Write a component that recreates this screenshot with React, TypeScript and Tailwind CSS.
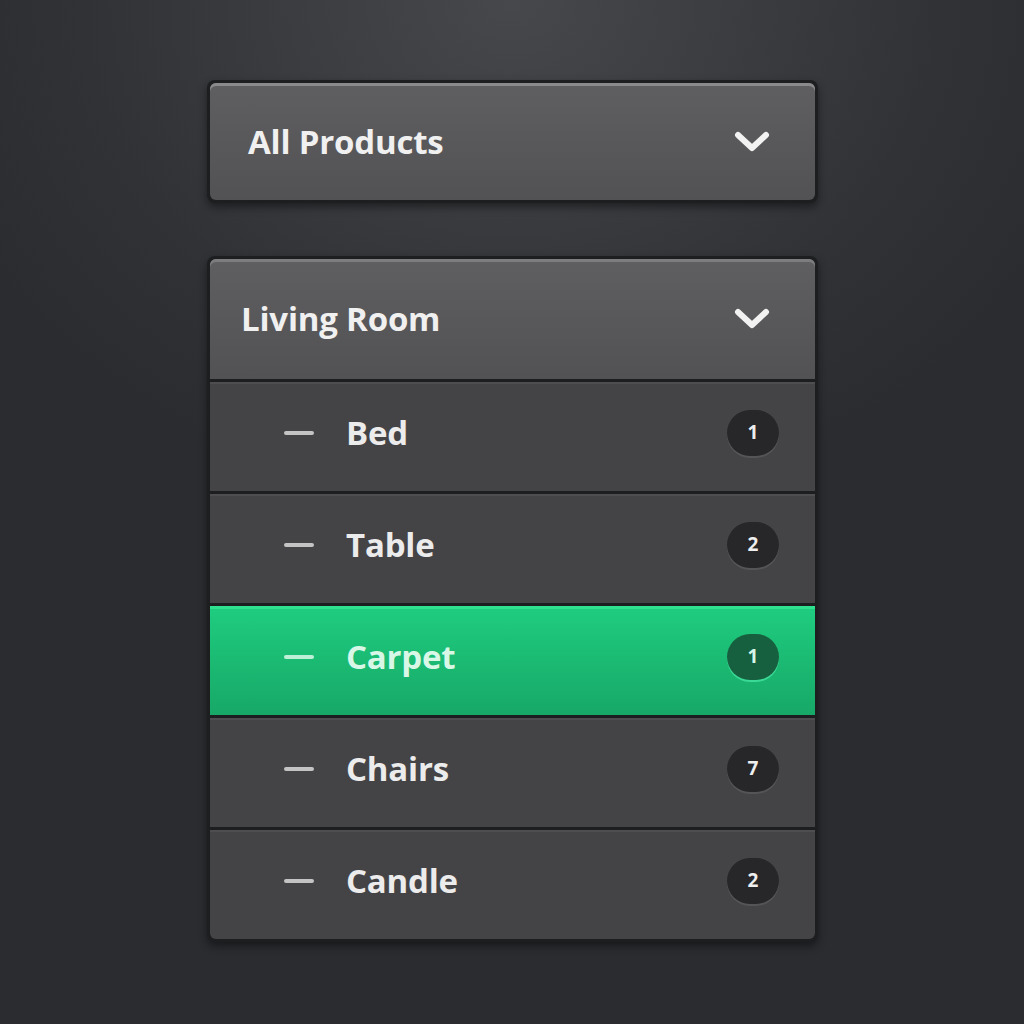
import { useState } from 'react';

const items = [
  { name: 'Bed', count: 1 },
  { name: 'Table', count: 2 },
  { name: 'Carpet', count: 1 },
  { name: 'Chairs', count: 7 },
  { name: 'Candle', count: 2 },
];

const Chevron = () => (
  <svg width="36" height="22" viewBox="0 0 36 22" className="shrink-0">
    <polyline points="4,4 18,17 32,4" fill="none" stroke="#f2f2f2" strokeWidth="6" strokeLinecap="round" strokeLinejoin="round" />
  </svg>
);

const App = () => {
  const [active, setActive] = useState('Carpet');

  return (
    <div
      className="w-[1024px] h-[1024px] overflow-hidden bg-[radial-gradient(ellipse_60%_50%_at_50%_0%,#47484b,#303236_70%,#2a2c30)] pt-[80px] pl-[207px]"
      style={{ fontFamily: '"Open Sans", "Liberation Sans", sans-serif' }}
    >
      <div className="w-[611px] flex flex-col gap-[53px]">
        <div className="rounded-lg bg-[#1d1e20] p-[3px] shadow-[0_4px_8px_rgba(0,0,0,0.45)]">
          <div className="h-[117px] rounded-md bg-gradient-to-b from-[#5f5f61] to-[#525254] shadow-[inset_0_3px_0_#8a8a8c] flex items-center justify-between pl-[38px] pr-[45px]">
            <span className="text-[33px] font-bold text-[#f0f0f0] tracking-[-0.2px]">All Products</span>
            <Chevron />
          </div>
        </div>

        <div className="rounded-lg bg-[#1d1e20] p-[3px] shadow-[0_4px_8px_rgba(0,0,0,0.45)]">
          <div className="h-[120px] rounded-t-md bg-gradient-to-b from-[#5f5f61] to-[#525254] shadow-[inset_0_3px_0_#7d7d80] flex items-center justify-between pl-[31px] pr-[45px]">
            <span className="text-[33px] font-bold text-[#f0f0f0] tracking-[-0.2px]">Living Room</span>
            <Chevron />
          </div>
          <div className="flex flex-col gap-[3px] pt-[3px]">
            {items.map((item, i) => {
              const on = item.name === active;
              return (
                <button
                  key={item.name}
                  onClick={() => setActive(item.name)}
                  className={`h-[109px] flex items-center pl-[74px] pr-[36px] pb-[8px] text-left ${
                    on
                      ? 'bg-gradient-to-b from-[#1fcd80] to-[#17a867] shadow-[inset_0_3px_0_#2fe08f]'
                      : 'bg-[#444447] shadow-[inset_0_2px_0_#4e4e51]'
                  } ${i === items.length - 1 ? 'rounded-b-md' : ''}`}
                >
                  <span className={`w-[30px] h-[4px] rounded-sm ${on ? 'bg-[#bdf0d6]' : 'bg-[#c4c4c4]'}`} />
                  <span className={`ml-[32px] flex-1 text-[33px] font-bold tracking-[-0.2px] ${on ? 'text-[#d8f7e7]' : 'text-[#ececec]'}`}>
                    {item.name}
                  </span>
                  <span
                    className={`w-[52px] h-[46px] rounded-full flex items-center justify-center text-[19px] font-bold ${
                      on ? 'bg-[#17603f] text-[#d6f5e6] shadow-[0_2px_0_#3bd996]' : 'bg-[#27272a] text-[#eeeeee] shadow-[0_2px_0_#555558]'
                    }`}
                  >
                    {item.count}
                  </span>
                </button>
              );
            })}
          </div>
        </div>
      </div>
    </div>
  );
};

export default App;
